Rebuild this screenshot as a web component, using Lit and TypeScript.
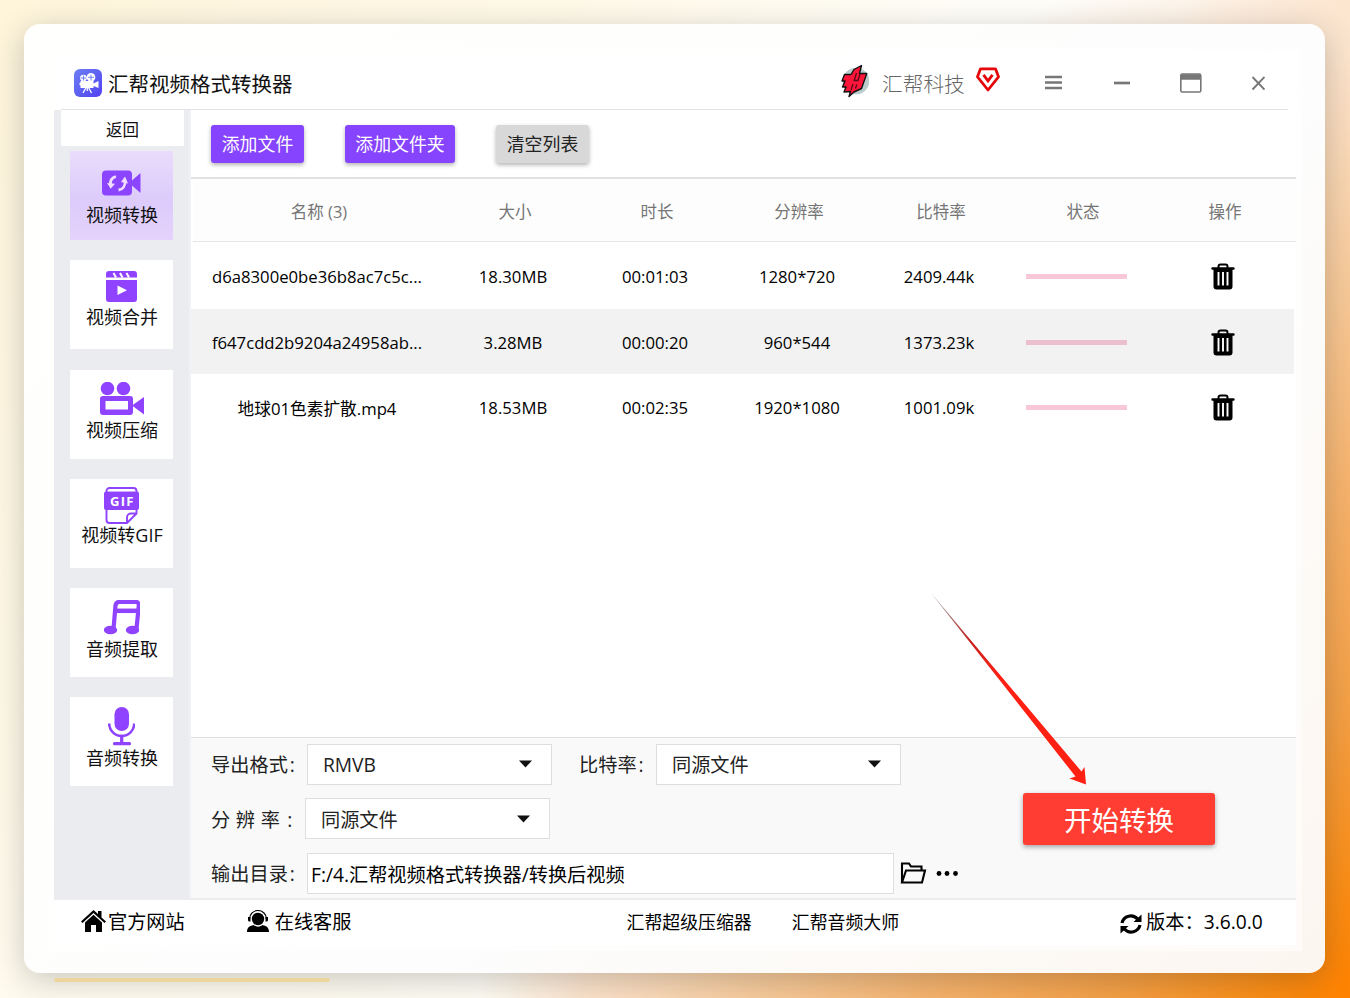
import { LitElement, html, css, svg } from 'lit';
import { customElement, property } from 'lit/decorators.js';

const icons = {
  convert: svg`
    <path d="M4 .5h22a4 4 0 0 1 4 4v17a4 4 0 0 1-4 4H4a4 4 0 0 1-4-4v-17a4 4 0 0 1 4-4zM38.500 3v20L30 15.500V10.500z" fill="#8b45ff"/>
    <path d="M14 6.500c-4 1-6 4-5.500 8.500M16.500 20c4.500-.5 7-4.500 6.500-9.500" fill="none" stroke="#efdcff" stroke-width="2.800"/>
    <path d="M5 13l8 .8-4.300 5zM19 12l4-5.500 3 7z" fill="#efdcff"/>`,
  merge: svg`
    <path d="M3 0h25a3 3 0 0 1 3 3v3.500H0V3a3 3 0 0 1 3-3zM0 9h31v19a3 3 0 0 1-3 3H3a3 3 0 0 1-3-3z" fill="#8f43ff"/>
    <path d="M7.500 2l2.500 4.500M14 2l2.500 4.500M20.500 2l2.500 4.500" stroke="#fff" stroke-width="2"/>
    <path d="M11.500 14.500v9.500l9.500-4.700z" fill="#fff"/>`,
  compress: svg`
    <circle cx="7.500" cy="6.500" r="6.800" fill="#8f43ff"/>
    <circle cx="23.500" cy="6.500" r="6.800" fill="#8f43ff"/>
    <rect x="0" y="14" width="33" height="19" rx="3" fill="#8f43ff"/>
    <path d="M32 23.500L44 15v17.500z" fill="#8f43ff"/>
    <rect x="5.500" y="19" width="22.500" height="8.500" fill="#fff"/>`,
  gif: svg`
    <path d="M2.500 6V4a3 3 0 0 1 3-3h24a3 3 0 0 1 3 3v2M2.500 22v11a3 3 0 0 0 3 3H23l9.500-9.500V22M23 36v-5.500a4 4 0 0 1 4-4h6" fill="none" stroke="#8f43ff" stroke-width="1.900"/>
    <path d="M2 4.500h31a2 2 0 0 1 2 2V21a2 2 0 0 1-2 2H2a2 2 0 0 1-2-2V6.500a2 2 0 0 1 2-2z" fill="#8f43ff"/>
    <path d="M4.500 3.500h26" stroke="#fff" stroke-width="1.200"/>
    <text x="6" y="19" class="gif-text" fill="#fff" textLength="23.500">GIF</text>`,
  music: svg`
    <path d="M9.500 29L11.500 5.500a4 4 0 0 1 4-3.700h16a3.300 3.300 0 0 1 3.300 3.600L32.500 29" fill="none" stroke="#8f43ff" stroke-width="4.200"/>
    <path d="M11 10.800h23" stroke="#8f43ff" stroke-width="4.500"/>
    <ellipse cx="6.500" cy="30" rx="6.700" ry="4.300" fill="#8f43ff"/>
    <ellipse cx="28.500" cy="30" rx="6.700" ry="4.300" fill="#8f43ff"/>`,
  mic: svg`
    <rect x="6.500" y="0" width="14.500" height="24" rx="7.200" fill="#8f43ff"/>
    <path d="M1.200 16.500a12.500 12.500 0 0 0 25 0" fill="none" stroke="#8f43ff" stroke-width="2.600"/>
    <path d="M13.700 29v7.500M6.500 36.700h15" stroke="#8f43ff" stroke-width="3.200" stroke-linecap="round"/>`,
};

const sideItems = [
  { icon: 'convert', label: '视频转换', w: 39, h: 26, top: 19, gap: 6, active: true },
  { icon: 'merge', label: '视频合并', w: 31, h: 31, top: 11, gap: 2 },
  { icon: 'compress', label: '视频压缩', w: 44, h: 33, top: 12, gap: 2.5 },
  { icon: 'gif', label: '视频转GIF', w: 35, h: 37, top: 8.5, gap: -2.5 },
  { icon: 'music', label: '音频提取', w: 36, h: 35, top: 11.5, gap: 1 },
  { icon: 'mic', label: '音频转换', w: 27.5, h: 39, top: 9.5, gap: -1 },
];

const columns = ['名称 (3)', '大小', '时长', '分辨率', '比特率', '状态', '操作'];

const files = [
  { name: 'd6a8300e0be36b8ac7c5c...', size: '18.30MB', time: '00:01:03', res: '1280*720', rate: '2409.44k' },
  { name: 'f647cdd2b9204a24958ab...', size: '3.28MB', time: '00:00:20', res: '960*544', rate: '1373.23k' },
  { name: '地球01色素扩散.mp4', size: '18.53MB', time: '00:02:35', res: '1920*1080', rate: '1001.09k' },
];

const trash = html`
  <svg width="24" height="27" viewBox="0 0 24 27">
    <path d="M7.500 5V3.500a2 2 0 0 1 2-2h5a2 2 0 0 1 2 2V5" fill="none" stroke="#000" stroke-width="2"/>
    <path d="M1.500 4.300h21a1 1 0 0 1 0 2.400H21.500V23.500a3 3 0 0 1-3 3h-13a3 3 0 0 1-3-3V6.700h-1a1 1 0 0 1 0-2.400z"/>
    <path d="M7.500 9v13.500M12 9v13.500M16.500 9v13.500" stroke="#fff" stroke-width="1.900"/>
  </svg>`;

@customElement('select-box')
class SelectBox extends LitElement {
  @property() value = '';

  static styles = css`
    :host {
      box-sizing: border-box;
      display: flex;
      align-items: center;
      justify-content: space-between;
      width: 245px;
      height: 41px;
      padding: 0 19px 0 15px;
      background: #fff;
      border: 1px solid #dedede;
    }
  `;

  render() {
    return html`
      <span>${this.value}</span>
      <svg width="13" height="8" viewBox="0 0 13 8"><path d="M0 .5h13L6.500 7.500z" fill="#111"/></svg>
    `;
  }
}

@customElement('app-root')
class AppRoot extends LitElement {
  static styles = css`
    :host {
      position: relative;
      display: block;
      box-sizing: border-box;
      width: 1350px;
      height: 998px;
      padding: 24px;
      overflow: hidden;
      font-family: "Open Sans", "Noto Sans CJK SC", sans-serif;
      color: #111;
      background:
        radial-gradient(ellipse 870px 1060px at 100% 100%, #ff8200 0%, #fb8d15 10%, #f5a045 27%, #f7b066 45%, #f8cb9b 68%, #fce3cb 88%, rgba(255, 240, 226, 0) 100%),
        radial-gradient(circle 170px at 100% 0, #fde8d4 0%, rgba(255, 240, 226, 0) 100%),
        radial-gradient(ellipse 1250px 1700px at 0 0, #fff5db 0%, #fff9e8 45%, #fffdf6 75%, #fdfefe 100%);
    }

    * {
      box-sizing: border-box;
    }

    svg {
      display: block;
      flex: none;
    }

    .card {
      height: 949px;
      width: 1301px;
      padding: 29px 29px 28px 30px;
      border-radius: 16px;
      background: linear-gradient(135deg, #fffffd 0%, #fdfdfd 60%, #fcf6f0 100%);
      box-shadow: 0 7px 32px rgba(20, 30, 40, 0.23);
    }

    .window {
      display: flex;
      flex-direction: column;
      height: 892px;
      background: #fff;
      outline: 6px solid rgba(255, 255, 255, 0.5);
    }

    .titlebar {
      display: flex;
      align-items: center;
      height: 57px;
      margin: 0 8px 0 7px;
      padding-left: 13px;
      padding-top: 3px;
      border-bottom: 1px solid #e3e3e3;
    }

    .title {
      margin-left: 6px;
      width: 733px;
      font-size: 20.5px;
      white-space: nowrap;
    }

    .brand {
      margin: 0 10px 0 13px;
      width: 84px;
      font-size: 20.7px;
      font-weight: 300;
      color: #666;
      white-space: nowrap;
    }

    .vip {
      margin-top: -7px;
    }

    .controls {
      display: flex;
      align-items: center;
      margin-left: 45px;
    }

    .main {
      display: flex;
      height: 788px;
    }

    .sidebar {
      width: 137px;
      background: #ebecf0;
      border-right: 2px solid #f0f1f4;
    }

    .back {
      height: 36px;
      width: 123px;
      margin: 0 0 5px 7px;
      line-height: 40px;
      font-size: 16.5px;
      text-align: center;
      background: #fff;
    }

    .side-list {
      display: flex;
      flex-direction: column;
      align-items: flex-start;
      gap: 20.3px;
      padding-left: 16px;
    }

    .side-item {
      display: flex;
      flex-direction: column;
      align-items: center;
      width: 103px;
      height: 89px;
      background: #fff;
      font-size: 18px;
      line-height: 26px;
      white-space: nowrap;
    }

    .side-item.active {
      background: linear-gradient(#eadcfb, #dccbfb 55%, #e5d3fc);
    }

    .side-item span {
      padding-left: 1px;
    }

    .gif-text {
      font: 700 13px "Open Sans", sans-serif;
    }

    .content {
      display: flex;
      flex-direction: column;
      width: 1105px;
    }

    .toolbar {
      display: flex;
      height: 69px;
      padding: 15px 0 0 20px;
      border-bottom: 2px solid #e2e2e2;
    }

    .btn {
      display: flex;
      align-items: center;
      justify-content: center;
      height: 38px;
      width: 93px;
      padding-bottom: 2px;
      font-size: 17.9px;
      color: #fff;
      background: #8744ff;
      border-radius: 3px;
      box-shadow: 0 2px 4px rgba(0, 0, 0, 0.3);
      white-space: nowrap;
    }

    .btn.folder {
      width: 110px;
      margin: 0 41px;
    }

    .btn.clear {
      color: #222;
      background: #d8d8d8;
    }

    .row {
      display: grid;
      grid-template-columns: 250px repeat(6, 142px);
      align-items: center;
      justify-items: center;
      width: 1103px;
      height: 65.5px;
      padding: 1px 0 0 1px;
      font-size: 16.7px;
      color: #000;
      white-space: nowrap;
    }

    .head {
      height: 63px;
      margin-left: 2px;
      margin-bottom: 1.4px;
      padding: 2px 0 0 1px;
      background: #fdfdfd;
      border-bottom: 1px solid #e6e6e6;
      color: #757575;
      font-size: 16.5px;
    }

    .row.alt {
      background: #f2f2f2;
    }

    .progress {
      width: 101px;
      height: 5px;
      margin-right: 10px;
      background: #f9c8d8;
    }

    .alt .progress {
      background: #ecbfce;
    }

    .settings {
      flex: none;
      display: flex;
      flex-direction: column;
      gap: 13.5px;
      height: 161px;
      margin-top: auto;
      padding: 5.5px 0 0 20px;
      background: #f9f9f9;
      border-top: 1px solid #e0e0e0;
      font-size: 19.2px;
      color: #222;
    }

    .field {
      display: flex;
      align-items: center;
      height: 41px;
      white-space: nowrap;
    }

    .label {
      width: 96px;
      letter-spacing: 0.1px;
    }

    .colon {
      margin-left: 1.5px;
    }

    .label.spaced {
      width: 94px;
      word-spacing: 0.5px;
    }

    .label.rate {
      width: 77px;
      margin-left: 27px;
    }

    .path {
      width: 587px;
      height: 41px;
      padding-left: 3px;
      line-height: 41px;
      color: #000;
      background: #fff;
      border: 1px solid #dedede;
    }

    .folder-icon {
      margin-left: -1px;
    }

    .footer {
      display: flex;
      align-items: center;
      height: 47px;
      padding-left: 27px;
      padding-bottom: 3px;
      border-top: 2px solid #ededed;
      font-size: 19.2px;
      color: #000;
      white-space: nowrap;
    }

    .link {
      font-size: 17.9px;
    }

    /* call-to-action sits over the settings panel */
    .start {
      position: absolute;
      left: 1023px;
      top: 793px;
      width: 192px;
      height: 52px;
      padding-bottom: 1px;
      border-radius: 3px;
      font-size: 27.5px;
      color: #fff;
      background: #ff3d32;
      display: flex;
      align-items: center;
      justify-content: center;
      box-shadow: 0 2px 5px rgba(0, 0, 0, 0.35);
    }

    .arrow {
      position: absolute;
      left: 930px;
      top: 592px;
    }

    .accent {
      position: absolute;
      left: 54px;
      top: 977.5px;
      width: 276px;
      height: 4px;
      border-radius: 2px;
      background: #ebd59b;
    }
  `;

  renderTitlebar() {
    return html`
      <div class="titlebar">
        <svg width="28" height="28" viewBox="0 0 28 28">
          <defs>
            <linearGradient id="logo" x1="0" y1="0" x2="1" y2="1">
              <stop offset="0" stop-color="#6b7ff2"/>
              <stop offset="1" stop-color="#5242f2"/>
            </linearGradient>
          </defs>
          <rect width="28" height="28" rx="6" fill="url(#logo)"/>
          <circle cx="9.500" cy="9" r="3.300" fill="#fff"/>
          <circle cx="17" cy="8.300" r="4.300" fill="#fff"/>
          <path d="M6.500 12h13v2.500l5-2.500v7l-5-2v2h-13v-2.500l-1-.5v-2l1-.5z" fill="#fff"/>
          <path d="M12 18.500l-3 5.500M13.300 18.500V22M14.500 18.500l3 5.500" fill="none" stroke="#fff" stroke-width="1.300"/>
          <path d="M9.500 6.500v5M7 9h5M17 5.500v6M14 8.300h6" stroke="#6474ef" stroke-width=".9"/>
        </svg>
        <div class="title">汇帮视频格式转换器</div>
        <svg width="28" height="34" viewBox="0 0 28 34" style="margin-top:-4px">
          <circle cx="15" cy="17" r="13.300" fill="#bccccd"/>
          <path d="M20.500 1.500L18.500 9.500h7.300L20.500 24.500 13 28l-5 4.500 1.500-5-6.500.5 2-5H1.500L4 17H1l2.500-6.500H10L13 5.500z" fill="#ff1539" stroke="#111" stroke-width="1.400" stroke-linejoin="round"/>
          <path d="M15.500 9l-2.300 7.500h3.800l2-6.500M12 20l-2 6M15.800 20.500l-1.300 4" fill="none" stroke="#540b18" stroke-width="1.300"/>
        </svg>
        <div class="brand">汇帮科技</div>
        <svg class="vip" width="24" height="25" viewBox="0 0 24 25" fill="none" stroke="#e4080a">
          <path d="M4.500 1.800h15l3 8L12 23 1.500 9.800z" stroke-width="2.800" stroke-linejoin="round"/>
          <path d="M7.500 7.800l4.500 6 4.500-6" stroke-width="2.800"/>
        </svg>
        <div class="controls">
          <svg width="17" height="15" viewBox="0 0 17 15"><path d="M0 2h17M0 7.500h17M0 13h17" stroke="#777" stroke-width="2.500"/></svg>
          <svg width="118" height="20" viewBox="0 0 118 20"><path d="M52 10h16" stroke="#777" stroke-width="2.700"/></svg>
          <svg width="22" height="20" viewBox="0 0 22 20">
            <rect x=".8" y="1" width="20" height="18" rx="1.500" fill="none" stroke="#777" stroke-width="1.600"/>
            <path d="M1 4h20" stroke="#777" stroke-width="5.500"/>
          </svg>
          <svg width="63" height="20" viewBox="0 0 63 20"><path d="M50.500 4l12 12.500M62.500 4l-12 12.500" stroke="#777" stroke-width="1.900"/></svg>
        </div>
      </div>
    `;
  }

  renderSidebar() {
    return html`
      <div class="sidebar">
        <div class="back">返回</div>
        <div class="side-list">
          ${sideItems.map(item => html`
            <div class="side-item ${item.active ? 'active' : ''}" style="padding-top:${item.top}px">
              <svg width=${item.w} height=${item.h} viewBox="0 0 ${item.w} ${item.h}" style="margin-bottom:${item.gap}px">
                ${icons[item.icon]}
              </svg>
              <span>${item.label}</span>
            </div>
          `)}
        </div>
      </div>
    `;
  }

  renderTable() {
    return html`
      <div class="row head">${columns.map(name => html`<span>${name}</span>`)}</div>
      ${files.map((file, i) => html`
        <div class="row ${i % 2 ? 'alt' : ''}">
          <span>${file.name}</span>
          <span>${file.size}</span>
          <span>${file.time}</span>
          <span>${file.res}</span>
          <span>${file.rate}</span>
          <div class="progress"></div>
          ${trash}
        </div>
      `)}
    `;
  }

  renderSettings() {
    return html`
      <div class="settings">
        <div class="field">
          <span class="label">导出格式<span class="colon">:</span></span>
          <select-box value="RMVB"></select-box>
          <span class="label rate">比特率<span class="colon">:</span></span>
          <select-box value="同源文件"></select-box>
        </div>
        <div class="field">
          <span class="label spaced">分 辨 率 <span class="colon">:</span></span>
          <select-box value="同源文件"></select-box>
        </div>
        <div class="field">
          <span class="label">输出目录<span class="colon">:</span></span>
          <div class="path">F:/4.汇帮视频格式转换器/转换后视频</div>
          <svg class="folder-icon" width="66" height="24" viewBox="0 0 66 24">
            <path d="M9 21.500V2.500h7l2 3h10.500v4M9 21.500l4-12h19l-3 12z" fill="none" stroke="#000" stroke-width="2.100"/>
            <circle cx="46" cy="12.500" r="2.400"/>
            <circle cx="54" cy="12.500" r="2.400"/>
            <circle cx="62.500" cy="12.500" r="2.400"/>
          </svg>
        </div>
      </div>
    `;
  }

  renderFooter() {
    return html`
      <div class="footer">
        <svg width="25" height="23" viewBox="0 0 25 23">
          <path d="M12.500 0l4.500 4V1h3.500v6.500L25 11.500l-1.500 1.500L12.500 3 1.500 13 0 11.500z"/>
          <path d="M12.500 4.700l8.500 7.800V22h-6v-7h-5v7H4v-9.500z"/>
        </svg>
        <span style="margin:0 62px 0 2px">官方网站</span>
        <svg width="22" height="23" viewBox="0 0 22 23">
          <circle cx="11" cy="9" r="6.200"/>
          <path d="M2.500 9a8.500 8.500 0 0 1 17 0" fill="none" stroke="#000" stroke-width="1.100"/>
          <path d="M1 7h2.500v4.500H2.500a1.500 1.500 0 0 1-1.500-1.500zM18.500 7H21v3a1.500 1.500 0 0 1-1.500 1.500h-1zM0 22c0-5 3-6 6.500-7 3 2.300 6 2.300 9 0C19 16 22 17 22 22z"/>
        </svg>
        <span style="margin:0 275px 0 6px">在线客服</span>
        <span class="link">汇帮超级压缩器</span>
        <span class="link" style="margin:0 221px 0 40px">汇帮音频大师</span>
        <svg width="22" height="22" viewBox="0 0 22 22" style="margin-top:5px">
          <path d="M2 10a9 9 0 0 1 15.500-4M20 12a9 9 0 0 1-15.500 4" fill="none" stroke="#000" stroke-width="3.200"/>
          <path d="M21.500 1.500V9H13.500zM.5 20.500V13h8z"/>
        </svg>
        <span style="margin-left:4px">版本：3.6.0.0</span>
      </div>
    `;
  }

  render() {
    return html`
      <div class="card">
        <div class="window">
          ${this.renderTitlebar()}
          <div class="main">
            ${this.renderSidebar()}
            <div class="content">
              <div class="toolbar">
                <div class="btn">添加文件</div>
                <div class="btn folder">添加文件夹</div>
                <div class="btn clear">清空列表</div>
              </div>
              ${this.renderTable()}
              ${this.renderSettings()}
            </div>
          </div>
          ${this.renderFooter()}
        </div>
      </div>
      <div class="start">开始转换</div>
      <svg class="arrow" width="160" height="196" viewBox="0 0 160 196">
        <defs>
          <linearGradient id="fade" x1="0" y1="0" x2="1" y2="1">
            <stop offset="0" stop-color="#555" stop-opacity=".6"/>
            <stop offset=".25" stop-color="#c8201c"/>
            <stop offset=".45" stop-color="#ff2014"/>
          </linearGradient>
        </defs>
        <path d="M1 1L145.500 184.500 139.500 186.500 156 192.500 154.500 175 151.500 179.500z" fill="url(#fade)"/>
      </svg>
      <div class="accent"></div>
    `;
  }
}
